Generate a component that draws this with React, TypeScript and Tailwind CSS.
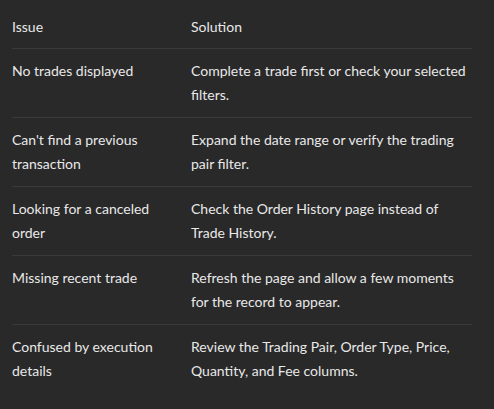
const rows = [
  ["No trades displayed", "Complete a trade first or check your selected filters."],
  ["Can't find a previous transaction", "Expand the date range or verify the trading pair filter."],
  ["Looking for a canceled order", "Check the Order History page instead of Trade History."],
  ["Missing recent trade", "Refresh the page and allow a few moments for the record to appear."],
  ["Confused by execution details", "Review the Trading Pair, Order Type, Price, Quantity, and Fee columns."],
];

export default function App() {
  return (
    <div className="min-h-screen w-full bg-[#292929] px-3 pt-[15px] font-['Lato',sans-serif] text-[14px] leading-6 text-[#e8e8e8]">
      <table className="w-[460px] border-collapse text-left">
        <thead>
          <tr className="border-b border-[#3a3a3a]">
            <th className="w-[179px] pb-[9px] pr-4 font-normal">Issue</th>
            <th className="pb-[9px] font-normal">Solution</th>
          </tr>
        </thead>
        <tbody>
          {rows.map(([issue, fix], i) => (
            <tr key={issue} className={i < rows.length - 1 ? "border-b border-[#3a3a3a]" : ""}>
              <td className="py-[10px] pr-4 align-top">{issue}</td>
              <td className="py-[10px] align-top">{fix}</td>
            </tr>
          ))}
        </tbody>
      </table>
    </div>
  );
}
